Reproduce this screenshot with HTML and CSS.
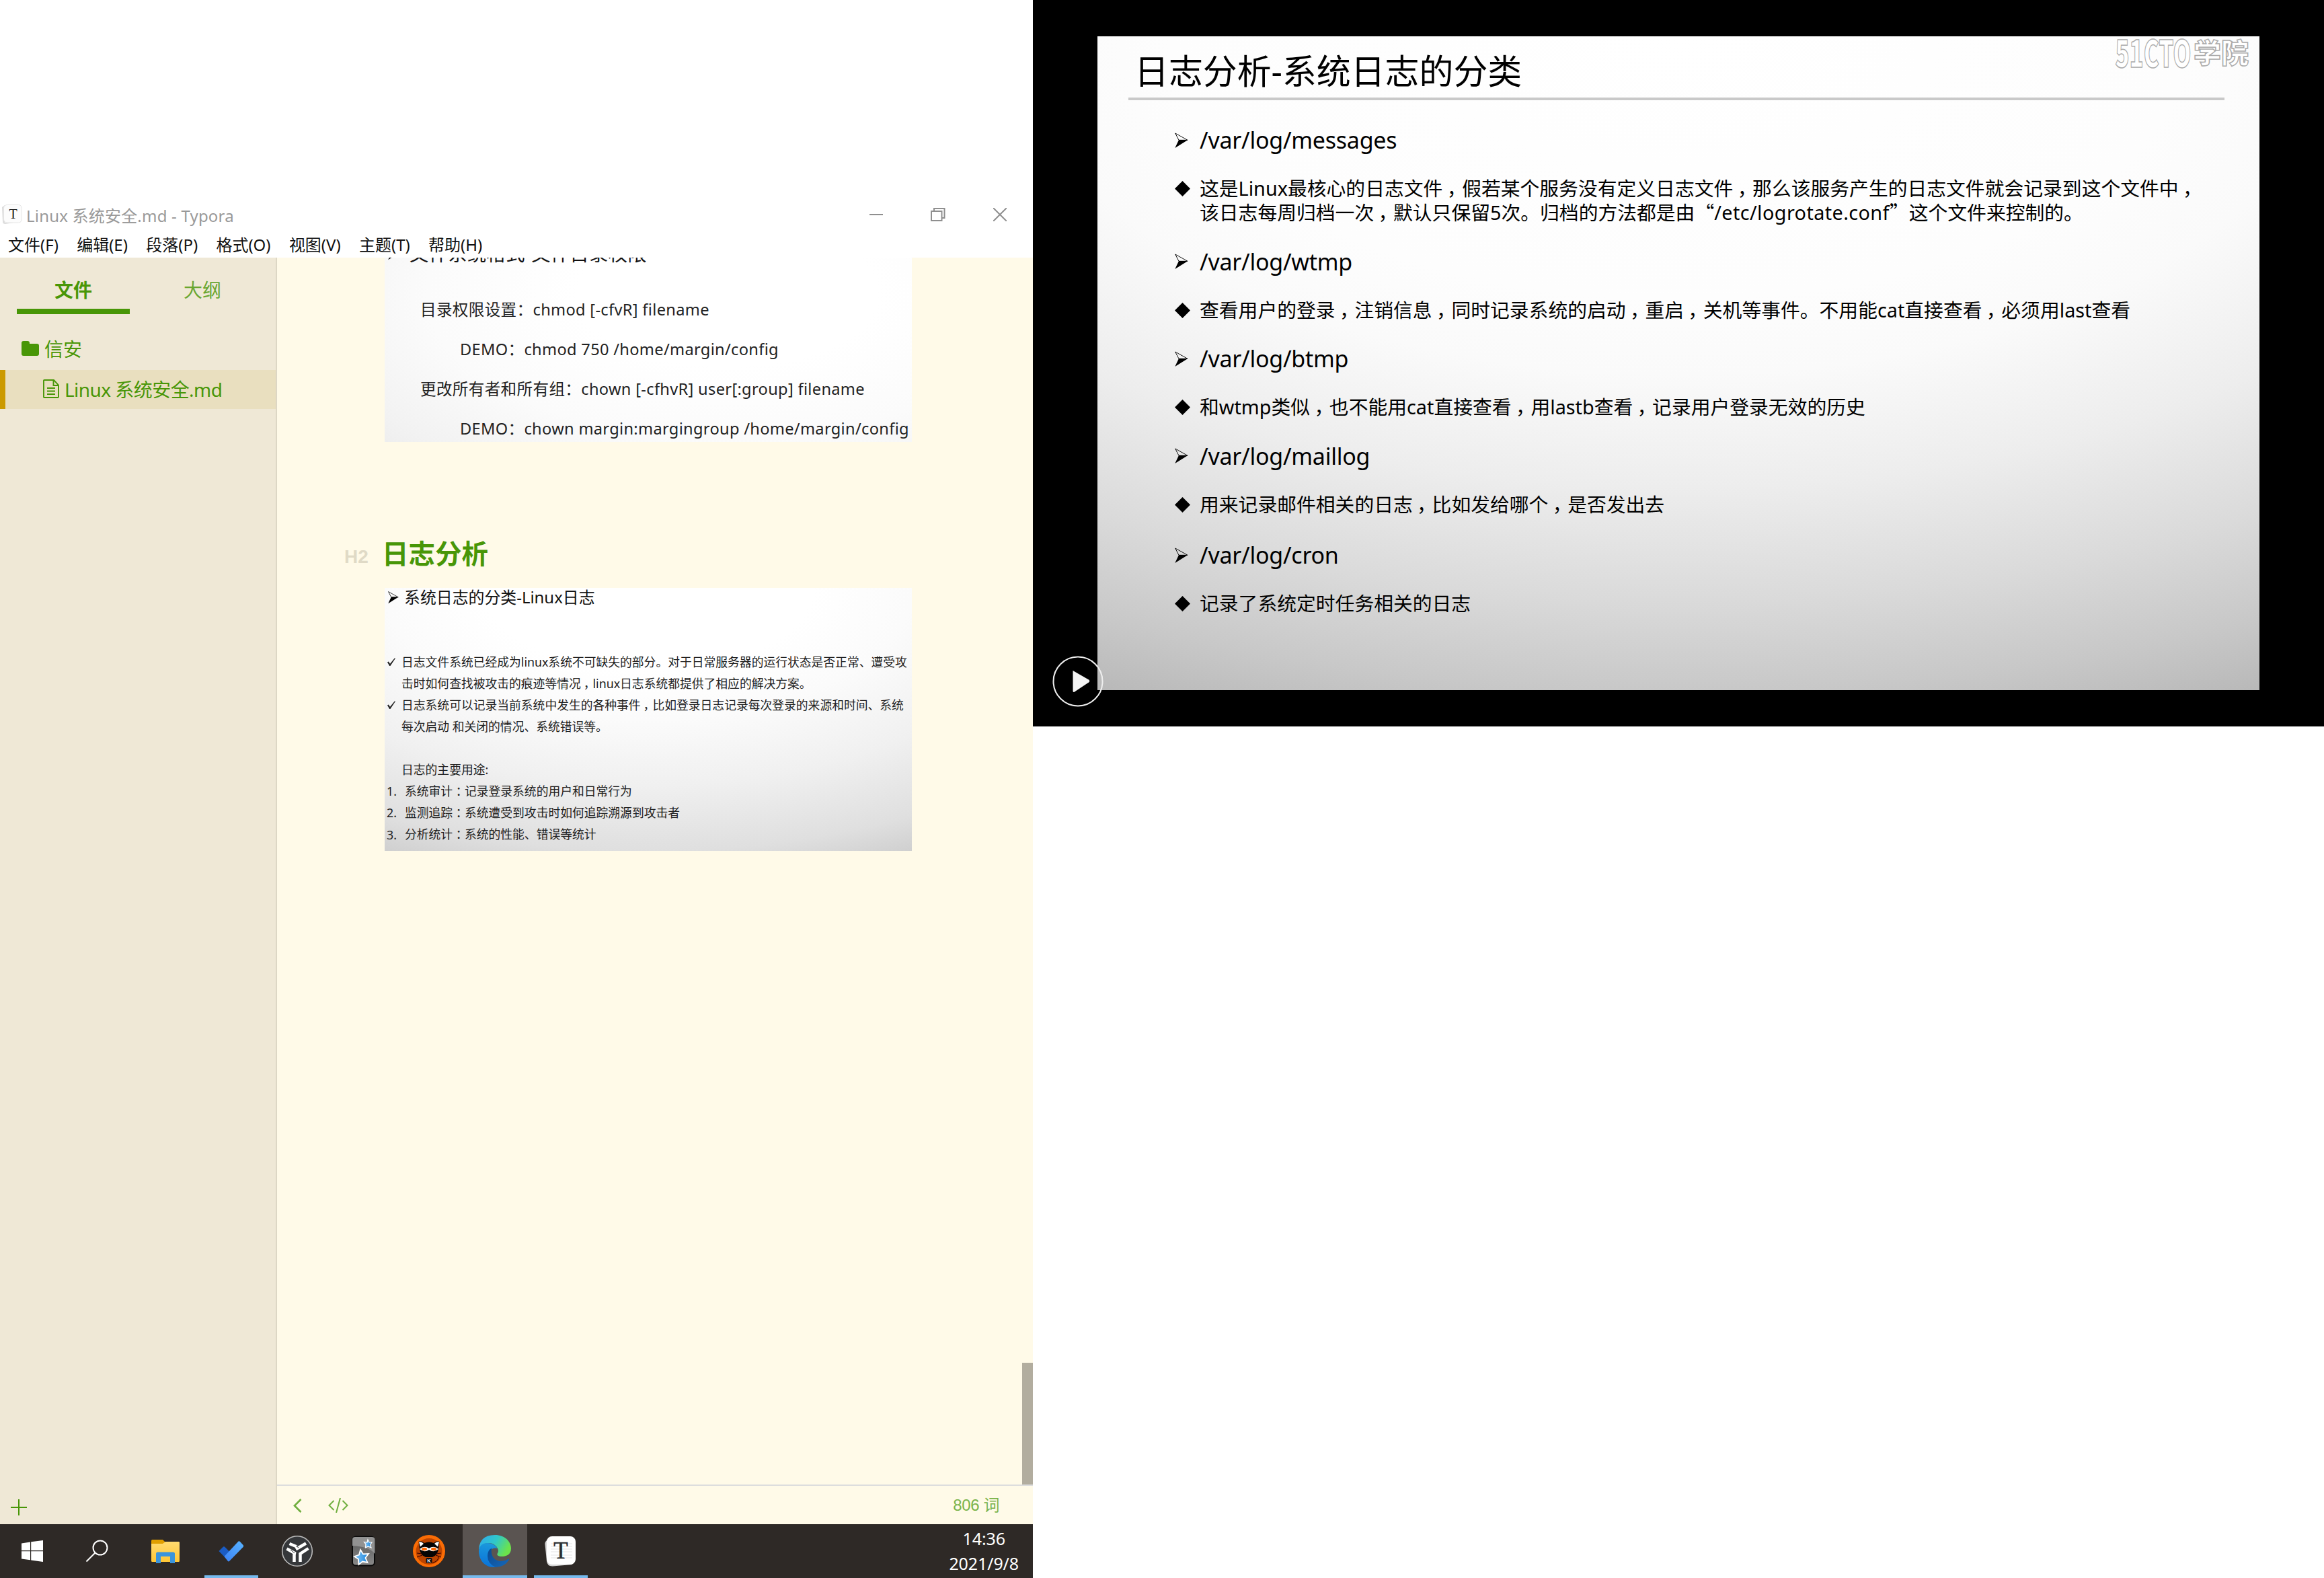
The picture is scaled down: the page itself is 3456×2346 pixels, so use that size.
FILE: index.html
```html
<!DOCTYPE html>
<html lang="zh-CN">
<head>
<meta charset="utf-8">
<title>Linux 系统安全.md - Typora</title>
<link rel="stylesheet" href="styles.css">
</head>
<body>
<svg class="defs" width="0" height="0">
  <symbol id="arrow" viewBox="0 0 20 23"><path d="M.7 1 19 11.3H6z" fill="none" stroke="#111" stroke-width="1"/><path d="M19.5 11 .3 23 6 11z" fill="#000"/></symbol>
  <symbol id="diamond" viewBox="0 0 23 23"><path d="M11.5 0 23 11.5 11.5 23 0 11.5z" fill="#000"/></symbol>
  <symbol id="check" viewBox="0 0 12 12"><path d="M0 6.500 1.800 5.400 4 8.800 11 .3 12 .8 4.400 12 3.200 12z" fill="#222"/></symbol>
</svg>
<div class="desktop">
  <section class="left-screen">
    <header class="titlebar">
      <svg class="app-icon" width="32" height="30" viewBox="0 0 32 30"><path d="M1 4 5 1V27L26 26 6 29Q2 29 2 26z" fill="#ddd"/><rect x="3.500" y=".5" width="27" height="26.500" rx="5" fill="#fcfcfc" stroke="#e6e6e6"/><text x="17.500" y="20.500" text-anchor="middle" class="serif" font-size="20" fill="#222">T</text></svg>
      <span class="window-title">Linux 系统安全.md - Typora</span>
      <div class="window-buttons">
        <svg width="20" height="20" viewBox="0 0 20 20"><path d="M0 10H20" stroke="#8f8f8f" stroke-width="2"/></svg>
        <svg width="22" height="20" viewBox="0 0 22 20"><path d="M1 5H16.500V19H1zM5 5V1H20.500V15H17" fill="none" stroke="#8f8f8f" stroke-width="2"/></svg>
        <svg width="20" height="20" viewBox="0 0 20 20"><path d="M0 0 20 20M20 0 0 20" stroke="#8f8f8f" stroke-width="2"/></svg>
      </div>
    </header>
    <nav class="menubar"><span>文件(F)</span><span>编辑(E)</span><span>段落(P)</span><span>格式(O)</span><span>视图(V)</span><span>主题(T)</span><span>帮助(H)</span></nav>
    <div class="workspace">
      <aside class="sidebar">
        <div class="tabs"><div class="tab active">文件</div><div class="tab">大纲</div></div>
        <div class="tree-row folder"><svg width="26" height="22" viewBox="0 0 26 22"><path d="M0 3Q0 0 3 0H9Q12 0 12 3V4H23Q26 4 26 7V19Q26 22 23 22H3Q0 22 0 19z" fill="#489607"/></svg>信安</div>
        <div class="tree-row file"><svg width="24" height="28" viewBox="0 0 24 28"><path d="M2 1H16L23 8.500V26Q23 27 22 27H2Q1 27 1 26V2Q1 1 2 1zM15.500 1V9H23M6 13H18M6 17.500H18M6 22H18" fill="none" stroke="#489607" stroke-width="1.900"/></svg>Linux 系统安全.md</div>
        <svg class="add" width="24" height="24" viewBox="0 0 24 24"><path d="M0 12H24M12 0V24" stroke="#489607" stroke-width="2"/></svg>
      </aside>
      <main class="editor">
        <div class="write">
          <div class="shot shot-one">
            <p class="shot-title"><svg width="16" height="20"><use href="#arrow"/></svg>文件系统格式-文件目录权限</p>
            <p>目录权限设置<span class="colon">：</span>chmod [-cfvR] filename</p>
            <p class="indent">DEMO<span class="colon">：</span>chmod 750 /home/margin/config</p>
            <p>更改所有者和所有组<span class="colon">：</span>chown [-cfhvR] user[:group] filename</p>
            <p class="indent">DEMO<span class="colon">：</span>chown margin:margingroup /home/margin/config</p>
          </div>
          <div class="heading"><span class="level">H2</span><h2>日志分析</h2></div>
          <div class="shot shot-two">
            <p class="title"><svg width="16" height="20"><use href="#arrow"/></svg>系统日志的分类-Linux日志</p>
            <p><i><svg width="12" height="12"><use href="#check"/></svg></i>日志文件系统已经成为linux系统不可缺失的部分。对于日常服务器的运行状态是否正常、遭受攻</p>
            <p><i></i>击时如何查找被攻击的痕迹等情况<span class="comma">，</span>linux日志系统都提供了相应的解决方案。</p>
            <p><i><svg width="12" height="12"><use href="#check"/></svg></i>日志系统可以记录当前系统中发生的各种事件<span class="comma">，</span>比如登录日志记录每次登录的来源和时间、系统</p>
            <p><i></i>每次启动 和关闭的情况、系统错误等。</p>
            <p class="use"><i></i>日志的主要用途:</p>
            <p class="num"><i>1.</i>系统审计<span class="colon">：</span>记录登录系统的用户和日常行为</p>
            <p class="num"><i>2.</i>监测追踪<span class="colon">：</span>系统遭受到攻击时如何追踪溯源到攻击者</p>
            <p class="num"><i>3.</i>分析统计<span class="colon">：</span>系统的性能、错误等统计</p>
          </div>
          <div class="scroll-thumb"></div>
        </div>
        <footer class="statusbar">
          <svg width="13" height="21" viewBox="0 0 13 21"><path d="M11.500 1 2 10.500 11.500 20" fill="none" stroke="#6fae3d" stroke-width="2.600"/></svg>
          <svg class="code" width="30" height="22" viewBox="0 0 30 22"><path d="M8.500 4 1.500 11 8.500 18M21.500 4 28.500 11 21.500 18M18 0 12 22" fill="none" stroke="#6fae3d" stroke-width="2"/></svg>
          <span class="words">806 词</span>
        </footer>
      </main>
    </div>
    <div class="taskbar">
      <svg viewBox="0 0 96 80"><path d="M32 28.500 45 26.500V39H32zM46.200 26.300 64 24V39H46.200zM32 40.200H45V53.200L32 51.500zM46.200 40.200H64V56L46.200 53.500z" fill="#fff"/></svg>
      <svg class="search" viewBox="0 0 96 80"><g fill="none" stroke="#fff" stroke-width="2"><circle cx="53" cy="35" r="10.500"/><path d="M45.500 42.500 32.500 55.500"/></g></svg>
      <svg viewBox="0 0 96 80"><defs><linearGradient id="fold" x2="0" y2="1"><stop stop-color="#ffdb70"/><stop offset="1" stop-color="#ffc636"/></linearGradient></defs><path d="M27 24.500Q27 23 28.500 23H44L48 27V32H27z" fill="#e09f00"/><path d="M27 29H44L48 26H68Q69 26 69 27.500V54.500Q69 56 67.500 56H28.500Q27 56 27 54.500z" fill="url(#fold)"/><path d="M34 58V44Q34 41.500 36.500 41.500H59.500Q62 41.500 62 44V58H55V48H41V58z" fill="#3a94dc"/></svg>
      <div class="task running"><svg viewBox="0 0 96 80"><defs><linearGradient id="tick" x1="0" y1="1" x2="1" y2="0"><stop stop-color="#3b82f6"/><stop offset="1" stop-color="#58b3ff"/></linearGradient></defs><path d="M29.500 40 36 33.500Q37 33 38 33.500L49 44.500 42 53z" fill="#1b5cc4"/><path d="M37.500 48 58.500 25.500Q60 25 61 26L66 31.500V33.500L45 55Q43.500 56 42.500 54.500z" fill="url(#tick)"/></svg></div>
      <svg viewBox="0 0 96 80"><circle cx="48" cy="40" r="22.300" fill="#35373a" stroke="#bbb" stroke-width="1.600"/><g stroke="#fff" stroke-width="4.500" fill="none"><path d="M36.500 29 47.500 33.500M61 28.500 46 37.200M32.500 36.500 44 43 43.500 45.500V56M64.500 36 52.500 44V56"/></g><path d="M46 32 50 35M38 38 44 43" stroke="#35373a" stroke-width="1"/></svg>
      <svg viewBox="0 0 96 80"><defs><linearGradient id="anki" x2="0" y2="1"><stop stop-color="#555"/><stop offset="1" stop-color="#8a8a8a"/></linearGradient><linearGradient id="star" x2="1"><stop stop-color="#87c7f6"/><stop offset="1" stop-color="#1c86dd"/></linearGradient></defs><rect x="32" y="18.500" width="33" height="43" rx="5" fill="url(#anki)" stroke="#0a0a0a" stroke-width="2"/><path d="M32 32V23Q32 19 36 19H61Q65.500 19 65.500 23V44Q57 33 32 32z" fill="#929292"/><g fill="url(#star)" stroke="#fff" stroke-width="1.800"><path d="M44 38 48 44.500 56 44 51.500 50 54.500 57 47 55.500 41.500 60 41 52 35 48 42 45.500z"/><path d="M55 23 57 27 61 27 58.500 30.500 60 35 55.500 33 51.500 35 52 30 49.500 26.500 54 27z" stroke-width="1.200"/></g></svg>
      <svg viewBox="0 0 96 80"><circle cx="48" cy="40" r="24" fill="#fa6c05"/><circle cx="48" cy="40.500" r="19.500" fill="#bc4400"/><path d="M32.500 26Q36 24 41 28 48 25 55 28 60 24 63.500 26L62 37Q61 46 53 49H43Q35 46 34 37z" fill="#050505"/><path d="M33 26.500Q37 25.500 40 29L35 33.500zM63 26.500Q59 25.500 56 29L61 33.500z" fill="#fff"/><path d="M34 37Q41 31 48 36 55 31 62 37 55 43 48 38 41 43 34 37z" fill="#fff"/><ellipse cx="41" cy="37" rx="4" ry="2.200" fill="#f60"/><ellipse cx="55" cy="37" rx="4" ry="2.200" fill="#f60"/><path d="M30 43 38 44M30 49 38 46M66 43 58 44M66 49 58 46M53 57Q62 56 62 48" stroke="#300" stroke-width="1" fill="none"/><rect x="43.500" y="50" width="9" height="8" rx="2" fill="#111"/><text x="48" y="57" text-anchor="middle" class="sans" font-size="7.500" font-weight="700" fill="#fff">K</text></svg>
      <div class="task current"><svg viewBox="0 0 96 80"><defs><linearGradient id="e1" x2="1" y2=".4"><stop stop-color="#2fa8f0"/><stop offset=".55" stop-color="#30c8c8"/><stop offset="1" stop-color="#6be34c"/></linearGradient><linearGradient id="e2" x1=".3" x2=".2" y2="1"><stop stop-color="#1b98dc"/><stop offset="1" stop-color="#0a72d8"/></linearGradient><linearGradient id="e3" x2="1" y2="1"><stop stop-color="#0b4a92"/><stop offset="1" stop-color="#1668b8"/></linearGradient></defs><path d="M24 38Q25 16 48 16C63 16 72 26 72 36C72 46 64 48 58 48C53 48 50 46 52 43Q54 40 52 36Q47 27 37 28Q28 29 24 38z" fill="url(#e1)"/><path d="M24 40Q25 28 37 28C46 28 51 34 51.500 36Q43 34 40 42Q37 56 54 62Q50 64 46 64C33 64 24 53 24 40z" fill="url(#e2)"/><path d="M43 35.500Q41 52 55 55Q63 55 68 51.500Q69.500 51 69 53Q62 64 49 64Q37 59 37 47Q37 39 43 35.500z" fill="url(#e3)"/></svg></div>
      <div class="task running"><svg viewBox="0 0 96 80"><path d="M24.500 30Q24 25 30 22L65 60 36 62.500Q28 63 27 55z" fill="#d5d5d5"/><rect x="27" y="18" width="43" height="42" rx="8" fill="#fff"/><path d="M33 29H65M33 33H65M33 37H65M33 41H65M33 46H65M33 50H65" stroke="#e4e4e4" stroke-width="1.200"/><text x="48" y="50.500" text-anchor="middle" class="serif" font-size="35" fill="#2b2f31" stroke="#2b2f31" stroke-width=".6">T</text></svg></div>
      <div class="clock"><span>14:36</span><span>2021/9/8</span></div>
    </div>
  </section>
  <section class="right-screen">
    <div class="video">
      <div class="slide">
        <h1>日志分析-系统日志的分类</h1>
        <div class="rule"></div>
        <div class="body">
          <p class="path"><svg width="20" height="23"><use href="#arrow"/></svg>/var/log/messages</p>
          <div class="desc"><svg width="23" height="23"><use href="#diamond"/></svg><div>这是Linux最核心的日志文件<span class="comma">，</span>假若某个服务没有定义日志文件<span class="comma">，</span>那么该服务产生的日志文件就会记录到这个文件中<span class="comma">，</span><br>该日志每周归档一次<span class="comma">，</span>默认只保留5次。归档的方法都是由<b>“</b><span class="conf">/etc/logrotate.conf</span><b>”</b>这个文件来控制的。</div></div>
          <p class="path"><svg width="20" height="23"><use href="#arrow"/></svg>/var/log/wtmp</p>
          <div class="desc"><svg width="23" height="23"><use href="#diamond"/></svg><div>查看用户的登录<span class="comma">，</span>注销信息<span class="comma">，</span>同时记录系统的启动<span class="comma">，</span>重启<span class="comma">，</span>关机等事件。不用能cat直接查看<span class="comma">，</span>必须用last查看</div></div>
          <p class="path"><svg width="20" height="23"><use href="#arrow"/></svg>/var/log/btmp</p>
          <div class="desc"><svg width="23" height="23"><use href="#diamond"/></svg><div>和wtmp类似<span class="comma">，</span>也不能用cat直接查看<span class="comma">，</span>用lastb查看<span class="comma">，</span>记录用户登录无效的历史</div></div>
          <p class="path"><svg width="20" height="23"><use href="#arrow"/></svg>/var/log/maillog</p>
          <div class="desc last-pair"><svg width="23" height="23"><use href="#diamond"/></svg><div>用来记录邮件相关的日志<span class="comma">，</span>比如发给哪个<span class="comma">，</span>是否发出去</div></div>
          <p class="path"><svg width="20" height="23"><use href="#arrow"/></svg>/var/log/cron</p>
          <div class="desc"><svg width="23" height="23"><use href="#diamond"/></svg><div>记录了系统定时任务相关的日志</div></div>
        </div>
        <div class="watermark"><span class="wm-latin">51CTO</span><span>学院</span></div>
      </div>
      <svg class="play" width="76" height="78" viewBox="0 0 76 78"><circle cx="38" cy="39" r="36.500" fill="none" stroke="#eee" stroke-width="2"/><path d="M30.500 23 54 36.500Q56.500 38.500 54 40.500L33 54.500Q30.500 56 30.500 53z" fill="#f4f4f4"/></svg>
    </div>
  </section>
</div>
</body>
</html>
```

FILE: styles.css
```css
* { box-sizing: border-box; }
body { margin: 0; background: #fff; font-family: "Noto Sans", "Noto Sans CJK SC", sans-serif; }
p, h1, h2 { margin: 0; white-space: nowrap; font-weight: 400; }
svg { display: block; flex: none; }
.defs { position: absolute; }
.serif { font-family: "Liberation Serif", serif; }
.sans { font-family: "Liberation Sans", sans-serif; }
.comma { display: inline-block; width: 1em; text-indent: .22em; }
.colon { font-family: "Noto Sans CJK TC", sans-serif; }

.desktop { display: flex; width: 3456px; height: 2346px; overflow: hidden; }
.left-screen { display: flex; flex-direction: column; width: 1536px; height: 2346px; padding-top: 296px; background: #fff; }
.right-screen { width: 1920px; }

/* window frame */
.titlebar { display: flex; align-items: center; height: 50px; padding: 0 39px 4px 2px; font-size: 24px; line-height: 34px; color: #999; white-space: nowrap; }
.window-title { margin: 4px auto 0 5px; letter-spacing: .2px; }
.window-buttons { display: flex; align-items: center; gap: 71px; }
.menubar { display: flex; gap: 27.300px; height: 37px; padding-left: 12px; font-size: 24px; line-height: 36px; color: #111; white-space: nowrap; }
.workspace { display: flex; height: 1883px; }

/* sidebar */
.sidebar { display: flex; flex-direction: column; width: 412px; background: #efe8d6; border-right: 2px solid #ddd7c5; color: #489607; font-size: 28px; white-space: nowrap; }
.tabs { display: flex; height: 84px; padding: 0 25px; }
.tab { width: 168px; margin-right: 24px; text-align: center; line-height: 96px; opacity: .8; }
.tab.active { font-weight: 700; opacity: 1; border-bottom: 8px solid #489607; }
.tab:last-child { margin-right: 0; }
.tree-row { display: flex; align-items: center; gap: 8px; height: 58px; }
.folder { margin-top: 22px; margin-bottom: 3px; padding-left: 32px; }
.file { padding: 0 0 3px 56px; background: #e9dfbf; border-left: 8px solid #cb9a00; letter-spacing: -.55px; }
.add { margin: auto 0 13px 16px; }

/* editor */
.editor { display: flex; flex-direction: column; flex: 1; background: #fffae8; }
.write { position: relative; height: 1824px; overflow: hidden; }
.shot { width: 784px; margin-left: 160px; color: #222; }
.shot-one { height: 274px; font-size: 23.600px; line-height: 36px; letter-spacing: .33px; background: radial-gradient(ellipse 95% 130% at 65% 20%, #fff 30%, #fbfbfb 60%, #f2f2f2 85%, #eaeaea); overflow: hidden; }
.shot-one p { height: 36px; margin: 0 0 23px 53px; }
.shot-one .indent { margin-left: 112px; }
.shot-one .shot-title { display: flex; gap: 16px; align-items: center; font-size: 28.300px; margin: -24px 0 46px 5px; color: #111; }
.heading { display: flex; align-items: center; height: 60px; margin: 136px 0 21px 100px; }
.level { width: 56px; padding-top: 10px; font: 700 28px/32px "Liberation Sans", sans-serif; color: #e0dac6; }
.heading h2 { font-size: 39.500px; font-weight: 700; line-height: 56px; color: #489607; }
.shot-two { height: 391px; font-size: 17.800px; line-height: 32px; background: radial-gradient(ellipse 125% 125% at 50% 0%, #fff 25%, #fbfbfb 40%, #f0f0f0 60%, #dfdfdf 80%, #cbcbcb 92%); overflow: hidden; }
.shot-two p { display: flex; height: 32.150px; padding-left: 3px; }
.shot-two i { display: flex; align-items: center; width: 22px; padding-left: 1px; font-style: normal; }
.shot-two .num i { width: 27px; padding-left: 0; }
.shot-two .title { align-items: center; gap: 8px; height: 28px; margin: 0 0 65.500px; padding-left: 5px; font-size: 23.900px; line-height: 28px; color: #111; }
.shot-two .use { margin-top: 32px; }
.scroll-thumb { position: absolute; right: 0; bottom: 0; width: 16px; height: 181px; background: #b2ad9f; }
.statusbar { display: flex; align-items: center; height: 59px; padding: 1px 50px 0 24px; border-top: 2px solid #ddd; color: #79b34a; }
.code { margin-left: 39px; }
.words { margin-left: auto; font: 24px/34px "Liberation Sans", "Noto Sans CJK SC", sans-serif; letter-spacing: -.4px; }

/* taskbar */
.taskbar { display: flex; gap: 2px; height: 80px; background: #2e2926; color: #fff; }
.taskbar svg { width: 96px; height: 80px; }
.taskbar > svg:first-child { margin-right: -2px; }
.search { margin-right: 4px; }
.task { position: relative; width: 96px; }
.task::after { content: ""; position: absolute; left: 8px; right: 8px; bottom: 0; height: 4px; background: #76b9ed; }
.task.current { background: #5a5451; }
.task.current::after { left: 0; right: 0; }
.clock { display: flex; flex-direction: column; align-items: center; margin: 3px 21px 0 auto; font-size: 25px; line-height: 37px; letter-spacing: -.1px; }

/* video */
.video { position: relative; height: 1080px; padding: 54px 96px; background: #000; }
.slide { position: relative; width: 1728px; height: 972px; padding-top: 19px; overflow: hidden; color: #000; background: radial-gradient(ellipse 125% 115% at 50% 0%, #fff 0%, #fdfdfd 35%, #fafafa 45%, #ededed 60%, #dadada 75%, #c8c8c8 87%, #b8b8b8 96%); }
.slide h1 { height: 66px; padding-left: 55px; font-size: 50.900px; line-height: 66px; }
.rule { width: 1630px; height: 4px; margin: 6px 0 0 46px; background: #c9c9c9; }
.body { padding: 36px 0 0 115px; }
.path { display: flex; align-items: center; gap: 17px; height: 46px; margin-bottom: 31px; font-size: 34px; line-height: 46px; letter-spacing: -.25px; }
.desc { display: flex; gap: 14px; margin-bottom: 32.500px; font-size: 28.800px; line-height: 35px; white-space: nowrap; }
.desc svg { margin-top: 7px; }
.desc b { font: 28.800px/35px "Noto Sans CJK SC", sans-serif; }
.conf { letter-spacing: .4px; }
.last-pair { margin-bottom: 35.500px; }
.watermark { position: absolute; top: 0; right: 16px; display: flex; align-items: center; height: 44px; font: 900 41px/44px "Noto Sans CJK SC", sans-serif; color: #fff; -webkit-text-stroke: 1.500px #aaa; }
.wm-latin { margin-right: 3px; font-size: 55px; transform: scaleX(.63); transform-origin: right; }
.play { position: absolute; left: 29px; top: 974px; }
```
